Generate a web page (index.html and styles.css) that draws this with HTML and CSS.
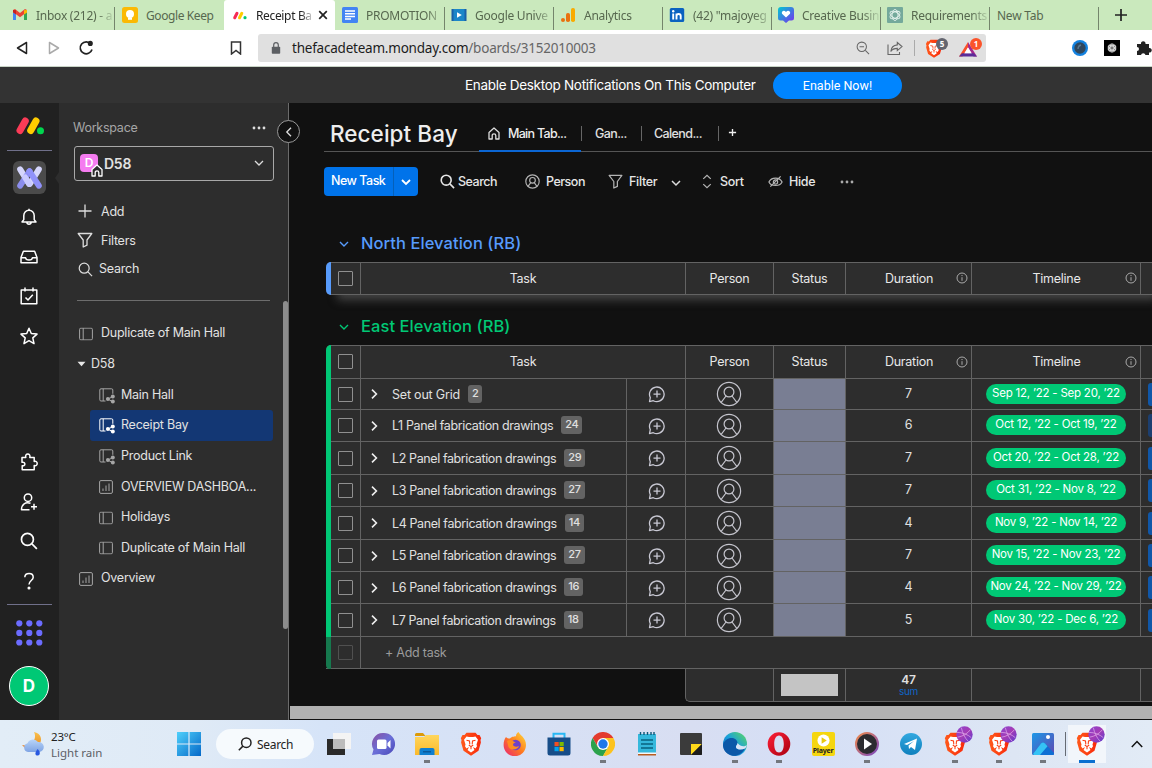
FILE: index.html
```html
<!DOCTYPE html>
<html lang="en">
<head>
<meta charset="utf-8">
<title>Receipt Bay</title>
<link rel="stylesheet" href="styles.css">
</head>
<body>
<svg class="sprite" aria-hidden="true">
  <defs>
    <linearGradient id="gBrave" x1="0" y1="0" x2="1" y2="0"><stop offset="0" stop-color="#ff5a1c"/><stop offset="1" stop-color="#f9280a"/></linearGradient>
    <linearGradient id="gWin" x1="0" y1="0" x2="1" y2="1"><stop offset="0" stop-color="#4fd0fb"/><stop offset="1" stop-color="#0568c8"/></linearGradient>
    <linearGradient id="gBall" x1="0" y1="0" x2="1" y2="1"><stop offset="0" stop-color="#8b45d0"/><stop offset=".5" stop-color="#a53bb5"/><stop offset="1" stop-color="#5a3fd0"/></linearGradient>
    <linearGradient id="gHeart" x1="0" y1="0" x2="1" y2="1"><stop offset="0" stop-color="#00c8d0"/><stop offset="1" stop-color="#7b2ff0"/></linearGradient>
    <linearGradient id="gEdge" x1="0" y1="1" x2="1" y2="0"><stop offset="0" stop-color="#0f5fb8"/><stop offset=".5" stop-color="#1ba0dc"/><stop offset="1" stop-color="#5fdc5a"/></linearGradient>
    <linearGradient id="gChat" x1="0" y1="0" x2="1" y2="1"><stop offset="0" stop-color="#8a4fa0"/><stop offset=".5" stop-color="#6a6fd8"/><stop offset="1" stop-color="#4a48b8"/></linearGradient>
    <linearGradient id="gFolder" x1="0" y1="0" x2="0" y2="1"><stop offset="0" stop-color="#ffd65c"/><stop offset="1" stop-color="#fbb92a"/></linearGradient>
    <linearGradient id="gFire" x1="1" y1="0" x2="0" y2="1"><stop offset="0" stop-color="#ffe03a"/><stop offset=".5" stop-color="#ff7a1f"/><stop offset="1" stop-color="#e8207a"/></linearGradient>
    <linearGradient id="gTg" x1="0" y1="0" x2="0" y2="1"><stop offset="0" stop-color="#32a8e0"/><stop offset="1" stop-color="#0f80bd"/></linearGradient>
    <linearGradient id="gPhoto" x1="0" y1="0" x2="1" y2="1"><stop offset="0" stop-color="#1c98e8"/><stop offset="1" stop-color="#6048b0"/></linearGradient>
    <linearGradient id="gMoon" x1="0" y1="0" x2="0" y2="1"><stop offset="0" stop-color="#fbc14a"/><stop offset="1" stop-color="#e8922a"/></linearGradient>
    <linearGradient id="gCloud" x1="0" y1="0" x2="0" y2="1"><stop offset="0" stop-color="#b8d4f8"/><stop offset="1" stop-color="#7fa4e4"/></linearGradient>
    <linearGradient id="gRing" x1="0" y1="0" x2="1" y2="1"><stop offset="0" stop-color="#f08a4a"/><stop offset="1" stop-color="#7a48c0"/></linearGradient>
    <linearGradient id="gOpera" x1="0" y1="0" x2="1" y2="1"><stop offset="0" stop-color="#ff2038"/><stop offset="1" stop-color="#a80010"/></linearGradient>
  </defs>
  <symbol id="search" viewBox="0 0 16 16"><circle cx="6.6" cy="6.6" r="5.3"/><path d="M10.6 10.6 15 15"/></symbol>
  <symbol id="filter" viewBox="0 0 16 16"><path d="M1.2 1.5h13.6L10 8v5.2L6.2 15V8z" stroke-linejoin="round"/></symbol>
  <symbol id="down" viewBox="0 0 10 10"><path d="M1 3l4 4 4-4"/></symbol>
  <symbol id="right" viewBox="0 0 10 10"><path d="M3 .6 7.4 5 3 9.4"/></symbol>
  <symbol id="left" viewBox="0 0 10 10"><path d="M7 .8 2.8 5 7 9.2"/></symbol>
  <symbol id="home" viewBox="0 0 12 13"><path d="M1 12V5.4L6 1l5 4.4V12H7.8V8.6a1.8 1.8 0 0 0-3.6 0V12z" stroke-linejoin="round"/></symbol>
  <symbol id="person" viewBox="0 0 26 26"><circle cx="13" cy="13" r="11.6"/><circle cx="13" cy="11" r="4.9"/><path d="M5.200 21.300 10 15M20.800 21.300 16 15"/></symbol>
  <symbol id="chatplus" viewBox="0 0 18 18"><path d="M2.300 12.600A7.300 7.300 0 1 1 5.300 15.700L1.500 16.700z" stroke-linejoin="round"/><path d="M9 5.600v7M5.500 9.100h7"/></symbol>
  <symbol id="info" viewBox="0 0 12 12"><circle cx="6" cy="6" r="5"/><path d="M6 5.200v3.600M6 3v1.100"/></symbol>
  <symbol id="board" viewBox="0 0 14 13"><rect x=".6" y=".6" width="12.800" height="11.800" rx="1.300"/><path d="M4.200.6v11.800"/></symbol>
  <symbol id="shared" viewBox="0 0 16 16"><path d="M6.500 13H2A1.200 1.200 0 0 1 .8 11.800V2A1.200 1.200 0 0 1 2 .8h10.600A1.200 1.200 0 0 1 13.800 2v3.800M4.200.8V13"/><path d="M13.800 8.700 8.800 11l5 2.800"/><g fill="currentColor" stroke="none"><circle cx="13.800" cy="8.400" r="2"/><circle cx="8.900" cy="11" r="2"/><circle cx="13.800" cy="13.600" r="2"/></g></symbol>
  <symbol id="dash" viewBox="0 0 14 14"><rect x=".6" y=".6" width="12.800" height="12.800" rx="1.300"/><path d="M4 8.500V11M7 5.500V11M10 3.500V11"/></symbol>
  <symbol id="brave" viewBox="0 0 22 24"><path d="M6.500.8h9l2 2.200 2-.1 1.700 3.300-.7 1.800.4 2.600-2.400 8.200-7.500 5-7.500-5L1.100 10.600l.4-2.600-.7-1.800L2.500 2.900l2 .1z" fill="url(#gBrave)"/><path d="M6.500 4.500 9 5h4l2.500-.5 2.500 3.300-1.500 4.700.5 1.700-1.500 2.300L13 15l1.500 3L11 20.500 7.500 18 9 15l-2.500 1.500L5 14.200l.5-1.700L4 7.800z" fill="#fff"/><path d="M6.500 8.300l3 .7.300 3.200M15.500 8.300l-3 .7-.3 3.200M8.800 13l2.200 1.600 2.200-1.600M11 14.600v2.600" stroke="#fb3d12" stroke-width="1.100" fill="none"/></symbol>
  <symbol id="ball" viewBox="0 0 16 16"><circle cx="8" cy="8" r="7.700" fill="url(#gBall)"/><path d="M1.500 10.500C6 10 11 7 13.500 3.500M1 6c5 0 10 2 13.500 5M5 1.500C6 6 8 11 11.500 14.500" stroke="#dfa8ea" stroke-width=".7" fill="none"/></symbol>
</svg>

<div class="tabs">
  <div class="tab t1"><svg class="fav" viewBox="0 0 16 16"><path d="M1 3v10h3V7.200l4 3 4-3V13h3V3l-2-1-5 4-5-4z" fill="#ea4335"/><path d="M1 5.200V13h3V7.400z" fill="#4285f4"/><path d="M12 7.400V13h3V5.200z" fill="#34a853"/><path d="M12 3.200 15 3v2.400l-3 2z" fill="#fbbc04"/><path d="M1 3v2.300l3 2V3.200z" fill="#c5221f"/></svg><span class="tt">Inbox (212) - a</span></div>
  <div class="tab t2"><svg class="fav" viewBox="0 0 16 16"><rect width="16" height="16" rx="2.500" fill="#fbb904"/><circle cx="8" cy="7" r="4" fill="#fff"/><path d="M6 10.500h4v2.300H6z" fill="#fff"/></svg><span class="tt">Google Keep</span></div>
  <div class="tab t3"><svg class="fav" viewBox="0 0 16 16"><g stroke-width="3" stroke-linecap="round"><path d="M2.700 10.800 5 6.300" stroke="#f62b54"/><path d="M7.500 10.800 9.800 6.300" stroke="#fc0"/></g><circle cx="13" cy="10.700" r="1.600" fill="#00ca72"/></svg><span class="tt">Receipt Ba</span><svg class="close" viewBox="0 0 10 10"><path d="M1.200 1.200l7.600 7.600M8.800 1.200 1.200 8.800"/></svg></div>
  <div class="tab t4 line"><svg class="fav" viewBox="0 0 16 16"><rect width="16" height="16" rx="1.500" fill="#4284f3"/><path d="M3 4h10M3 6.700h10M3 9.400h10M3 12.100h6" stroke="#fff" stroke-width="1.500"/></svg><span class="tt">PROMOTION</span></div>
  <div class="tab line"><svg class="fav" viewBox="0 0 16 16"><rect x=".5" y="2" width="15" height="12" fill="#1a5fa8"/><rect x="2.500" y="2" width="11" height="12" fill="#1b86c8"/><path d="M6 5.200v5.600L10.800 8z" fill="#fff"/></svg><span class="tt">Google Unive</span></div>
  <div class="tab line"><svg class="fav" viewBox="0 0 16 16"><rect x="11" y="1" width="4" height="14" rx="1.800" fill="#f9ab00"/><rect x="6" y="6" width="4" height="9" rx="1.800" fill="#e9710f"/><circle cx="3" cy="13" r="2" fill="#e9710f"/></svg><span class="tt">Analytics</span></div>
  <div class="tab line"><svg class="fav" viewBox="0 0 16 16"><rect x=".8" y="1" width="14.400" height="14" rx="1.500" fill="#0a62c0"/><path d="M4.200 6.500v6M7.500 6.500v6M7.500 9c0-2.600 4.200-2.600 4.200 0v3.500" stroke="#fff" stroke-width="1.900" fill="none"/><circle cx="4.200" cy="4.200" r="1.200" fill="#fff"/></svg><span class="tt">(42) "majoyeg</span></div>
  <div class="tab line"><svg class="fav" viewBox="0 0 16 16"><path d="M3 0h10a3 3 0 0 1 3 3v8a2.500 2.500 0 0 1-2.500 2.500H11L8 16l-3-2.500H2.500A2.500 2.500 0 0 1 0 11V3a3 3 0 0 1 3-3z" fill="url(#gHeart)"/><path d="M8 10.500 4 6.700C3 4.500 6 2.500 8 5c2-2.500 5-.5 4 1.700z" fill="#fff"/></svg><span class="tt">Creative Busin</span></div>
  <div class="tab line"><svg class="fav" viewBox="0 0 16 16"><rect width="16" height="16" rx="1" fill="#74a99b"/><g fill="none" stroke="#e4f2ec" stroke-width=".9"><ellipse cx="8" cy="8" rx="3" ry="5.500"/><ellipse cx="8" cy="8" rx="3" ry="5.500" transform="rotate(60 8 8)"/><ellipse cx="8" cy="8" rx="3" ry="5.500" transform="rotate(120 8 8)"/></g></svg><span class="tt">Requirements</span></div>
  <div class="tab line nt"><span class="tt">New Tab</span></div>
  <svg class="newtab" viewBox="0 0 12 12"><path d="M6 0v12M0 6h12"/></svg>
</div>

<div class="nav">
  <svg class="nb" viewBox="0 0 12 14"><path d="M10.500 1.500v11L1.500 7z"/></svg>
  <svg class="nb dim" viewBox="0 0 12 14"><path d="M1.500 1.500v11l9-5.500z"/></svg>
  <svg class="reload" viewBox="0 0 16 16"><path d="M12.900 4A6 6 0 1 0 14 9.500"/><circle cx="12.300" cy="3.400" r="1.700" fill="#222"/></svg>
  <svg class="mark" viewBox="0 0 12 14"><path d="M1.500 1h9v12L6 9.500 1.500 13z"/></svg>
  <div class="address">
    <svg class="lock" viewBox="0 0 10 12"><rect x=".8" y="4.800" width="8.400" height="7" rx=".8" fill="#5c5f63"/><path d="M2.700 5V3a2.300 2.300 0 0 1 4.600 0v2" fill="none" stroke="#5c5f63" stroke-width="1.200"/></svg>
    <span class="url"><b>thefacadeteam.monday.com</b>/boards/3152010003</span>
    <svg class="ai zoomi" viewBox="0 0 15 15"><circle cx="6.200" cy="6.200" r="5"/><path d="M10 10l4 4M3.800 6.200h4.800"/></svg>
    <svg class="ai share" viewBox="0 0 16 15"><path d="M1 3.500V13.500h11.500V11M10.300 1.500 15 5.600l-4.700 4V7.400C7 7.400 5 8.500 3.800 10.500c.4-3.600 2.700-6.300 6.500-6.600z"/></svg>
    <i class="asep"></i>
    <div class="shield"><svg viewBox="0 0 22 24"><use href="#brave"/></svg><em class="badge gray">5</em></div>
    <div class="shield bat"><svg viewBox="0 0 18 15"><path d="M9 .5 0 15h3.500L9 6z" fill="#f9502a"/><path d="M9 .5 18 15h-3.500L9 6z" fill="#a5288c"/><path d="M0 15h18l-3.300-3.300H3z" fill="#5b2c98"/><path d="M9 5.800 12.600 11.700H5.400z" fill="#fff"/></svg><em class="badge red">1</em></div>
  </div>
  <svg class="ext e1" viewBox="0 0 16 16"><circle cx="8" cy="8" r="8" fill="#1482e0"/><circle cx="8" cy="8" r="5.700" fill="#30475d"/><path d="M6 9c0-2 1-3.500 3-4" stroke="#5a7890" fill="none"/></svg>
  <svg class="ext e2" viewBox="0 0 16 16"><rect width="16" height="16" fill="#000"/><circle cx="8" cy="8" r="4.500" fill="#777"/><g fill="none" stroke="#ddd" stroke-width=".8"><ellipse cx="8" cy="8" rx="2" ry="4.200"/><ellipse cx="8" cy="8" rx="2" ry="4.200" transform="rotate(60 8 8)"/><ellipse cx="8" cy="8" rx="2" ry="4.200" transform="rotate(120 8 8)"/></g></svg>
  <svg class="ext e3" viewBox="0 0 16 16"><path d="M1 4h4a2.300 2.300 0 1 1 4.500 0H13v4a2.300 2.300 0 1 1 0 4.500V15H9.500a2.300 2.300 0 0 0-4.500 0H1v-4a2 2 0 0 0 0-4z" fill="#222"/></svg>
</div>

<div class="banner"><span class="btext">Enable Desktop Notifications On This Computer</span><span class="bbtn">Enable Now!</span></div>

<div class="app">
  <div class="rail">
    <div class="logo"><svg viewBox="0 0 28 18"><g stroke-width="7" stroke-linecap="round"><path d="M4 13.500 9.300 4" stroke="#fb3b57"/><path d="M14.700 13.500 20 4" stroke="#fc0"/></g><circle cx="24.500" cy="13.800" r="3.500" fill="#00d64f"/></svg></div>
    <i class="rline"></i>
    <div class="product"><svg viewBox="0 0 28 26"><g stroke-width="6.200" stroke-linecap="round"><path d="M23.700 4.500 14.500 19.500" stroke="#d5d6fc"/><path d="M4.300 4.500 13.500 19.500" stroke="#d5d6fc"/><path d="M14 6.500 4.300 21.500" stroke="#9092fa" opacity=".93"/><path d="M14 6.500 23.700 21.500" stroke="#9092fa"/><path d="M9.500 13l4 6.500" stroke="#c9caff"/></g></svg></div>
    <div class="ri"><svg viewBox="0 0 18 18"><path d="M2 14h14l-1.800-2.400V7.500a5.200 5.200 0 0 0-10.400 0v4.100zM9 2.200V.8M6.800 14.200c.3 2.800 4.100 2.800 4.400 0"/></svg></div>
    <div class="ri"><svg viewBox="0 0 18 18"><path d="M1 9.500 3.400 3.200h11.200L17 9.500v5.300H1zM1 9.800h4.600c.2 3 6.600 3 6.800 0H17"/></svg></div>
    <div class="ri"><svg viewBox="0 0 18 18"><path d="M1.200 3h15.600v13.800H1.200zM5 .5v4M13 .5v4M5.500 10.500 8 13l4.800-5.300"/></svg></div>
    <div class="ri"><svg viewBox="0 0 18 18"><path d="M9 1.300l2.300 5.200 5.700.6-4.200 3.800 1.200 5.700-5-2.900-5 2.900 1.200-5.700L1 7.100l5.700-.6z"/></svg></div>
    <div class="ri low"><svg viewBox="0 0 18 18"><path d="M2 4.500h3.800C4.300-.2 11.200-.2 9.800 4.500h4.400v4c4-1.300 4 5.300 0 4v4.300H2.200v-4.100c3.500 1 3.700-4.300-.2-3.400z"/></svg></div>
    <div class="ri"><svg viewBox="0 0 18 18"><circle cx="8" cy="4.700" r="3.700"/><path d="M10.500 10.300C5.500 8.800 1.500 11 1.500 16.800h8M14 10.800v6M11 13.800h6"/></svg></div>
    <div class="ri"><svg viewBox="0 0 16 16"><use href="#search"/></svg></div>
    <div class="ri"><svg viewBox="0 0 18 18"><path d="M4.800 5.200C5 .3 13.200.3 13.200 5.200c0 3.300-4.200 3.300-4.200 7.300"/><circle cx="9" cy="16" r=".8" fill="#fff"/></svg></div>
    <i class="rline l2"></i>
    <div class="dots"><svg viewBox="0 0 27 26"><g fill="#6c6cff"><circle cx="3.300" cy="3.300" r="3.100"/><circle cx="13.300" cy="3.300" r="3.100"/><circle cx="23.300" cy="3.300" r="3.100"/><circle cx="3.300" cy="12.900" r="3.100"/><circle cx="13.300" cy="12.900" r="3.100"/><circle cx="23.300" cy="12.900" r="3.100"/><circle cx="3.300" cy="22.500" r="3.100"/><circle cx="13.300" cy="22.500" r="3.100"/><circle cx="23.300" cy="22.500" r="3.100"/></g></svg></div>
    <div class="avatar">D</div>
  </div>

  <div class="side">
    <div class="notch"></div>
    <div class="collapse"><svg viewBox="0 0 10 10"><use href="#left"/></svg></div>
    <div class="whead"><span>Workspace</span><svg viewBox="0 0 14 4"><circle cx="2" cy="2" r="1.400"/><circle cx="7" cy="2" r="1.400"/><circle cx="12" cy="2" r="1.400"/></svg></div>
    <div class="wbox"><div class="wicon">D<svg viewBox="0 0 12 13"><use href="#home"/></svg></div><span>D58</span><svg class="wdown" viewBox="0 0 10 10"><use href="#down"/></svg></div>
    <div class="acts">
      <div class="act"><svg viewBox="0 0 16 16"><path d="M8 1.500v13M1.500 8h13"/></svg><span class="s1">Add</span></div>
      <div class="act"><svg viewBox="0 0 16 16"><use href="#filter"/></svg><span class="s2">Filters</span></div>
      <div class="act near"><svg viewBox="0 0 16 16"><use href="#search"/></svg><span class="s3">Search</span></div>
    </div>
    <div class="scroller">
      <div class="tree">
        <div class="node"><svg class="ic b" viewBox="0 0 14 13"><use href="#board"/></svg><span class="n1">Duplicate of Main Hall</span></div>
        <div class="node folder"><svg class="tri" viewBox="0 0 9 6"><path d="M.5.700h8L4.500 5.300z"/></svg><span>D58</span></div>
        <div class="node in"><svg class="ic" viewBox="0 0 16 16"><use href="#shared"/></svg><span>Main Hall</span></div>
        <div class="node in sel"><svg class="ic" viewBox="0 0 16 16"><use href="#shared"/></svg><span>Receipt Bay</span></div>
        <div class="node in"><svg class="ic" viewBox="0 0 16 16"><use href="#shared"/></svg><span>Product Link</span></div>
        <div class="node in"><svg class="ic b" viewBox="0 0 14 14"><use href="#dash"/></svg><span class="caps">OVERVIEW DASHBOA...</span></div>
        <div class="node in"><svg class="ic b" viewBox="0 0 14 13"><use href="#board"/></svg><span>Holidays</span></div>
        <div class="node in"><svg class="ic b" viewBox="0 0 14 13"><use href="#board"/></svg><span>Duplicate of Main Hall</span></div>
        <div class="node"><svg class="ic b" viewBox="0 0 14 14"><use href="#dash"/></svg><span>Overview</span></div>
      </div>
      <i class="thumb"></i>
    </div>
  </div>

  <div class="main">
    <div class="head">
      <h1>Receipt Bay</h1>
      <div class="view on"><svg viewBox="0 0 12 13"><use href="#home"/></svg><span>Main Tab...</span></div>
      <div class="view v2"><span>Gan...</span></div>
      <div class="view v3"><span>Calend...</span></div>
      <svg class="addview" viewBox="0 0 10 10"><path d="M5 1v8M1 5h8"/></svg>
    </div>
    <div class="tools">
      <div class="newtask"><span>New Task</span><svg viewBox="0 0 10 10"><use href="#down"/></svg></div>
      <div class="tool k1"><svg viewBox="0 0 16 16"><use href="#search"/></svg><span>Search</span></div>
      <div class="tool k2"><svg viewBox="0 0 26 26"><use href="#person"/></svg><span>Person</span></div>
      <div class="tool k3"><svg viewBox="0 0 16 16"><use href="#filter"/></svg><span>Filter</span></div>
      <div class="tool k4"><svg viewBox="0 0 10 10"><use href="#down"/></svg></div>
      <div class="tool k5"><svg viewBox="0 0 10 16"><path d="M1 5.200 5 1.400l4 3.800M1 10.800l4 3.800 4-3.800"/></svg><span>Sort</span></div>
      <div class="tool k6"><svg viewBox="0 0 16 14"><path d="M1 7.500C3.500 2 12.500 2 15 7.500 12.500 12.500 3.500 12.500 1 7.500z"/><circle cx="8" cy="7.500" r="2.300"/><path d="M2.500 12.500 13.500 1.500"/></svg><span>Hide</span></div>
      <div class="tool k7"><svg viewBox="0 0 14 4"><circle cx="2" cy="2" r="1.400"/><circle cx="7" cy="2" r="1.400"/><circle cx="12" cy="2" r="1.400"/></svg></div>
    </div>

    <div class="gtitle blue"><svg viewBox="0 0 10 10"><use href="#down"/></svg><h2>North Elevation (RB)</h2></div>
    <div class="row hd first">
      <i class="bar"></i><div class="c ck"><i class="box"></i></div><div class="c task">Task</div><div class="c">Person</div><div class="c">Status</div>
      <div class="c wi"><span>Duration</span><svg viewBox="0 0 12 12"><use href="#info"/></svg></div><div class="c wi"><span>Timeline</span><svg viewBox="0 0 12 12"><use href="#info"/></svg></div><div class="end"></div>
    </div>

    <div class="gtitle green"><svg viewBox="0 0 10 10"><use href="#down"/></svg><h2>East Elevation (RB)</h2></div>
    <div class="row hd second">
      <i class="bar"></i><div class="c ck"><i class="box"></i></div><div class="c task">Task</div><div class="c">Person</div><div class="c">Status</div>
      <div class="c wi"><span>Duration</span><svg viewBox="0 0 12 12"><use href="#info"/></svg></div><div class="c wi"><span>Timeline</span><svg viewBox="0 0 12 12"><use href="#info"/></svg></div><div class="end"></div>
    </div>
    <div class="row h31"><i class="bar"></i><div class="c ck"><i class="box"></i></div><div class="c name"><svg viewBox="0 0 10 10"><use href="#right"/></svg><span class="nm">Set out Grid</span><b>2</b></div><div class="c talk"><svg viewBox="0 0 18 18"><use href="#chatplus"/></svg></div><div class="c who"><svg viewBox="0 0 26 26"><use href="#person"/></svg></div><div class="c st"></div><div class="c num">7</div><div class="c tl"><span>Sep 12, ’22 - Sep 20, ’22</span></div><div class="end"><i></i></div></div>
    <div class="row h32"><i class="bar"></i><div class="c ck"><i class="box"></i></div><div class="c name"><svg viewBox="0 0 10 10"><use href="#right"/></svg><span class="nm">L1 Panel fabrication drawings</span><b>24</b></div><div class="c talk"><svg viewBox="0 0 18 18"><use href="#chatplus"/></svg></div><div class="c who"><svg viewBox="0 0 26 26"><use href="#person"/></svg></div><div class="c st"></div><div class="c num">6</div><div class="c tl"><span>Oct 12, ’22 - Oct 19, ’22</span></div><div class="end"><i class="dk"></i></div></div>
    <div class="row h33"><i class="bar"></i><div class="c ck"><i class="box"></i></div><div class="c name"><svg viewBox="0 0 10 10"><use href="#right"/></svg><span class="nm">L2 Panel fabrication drawings</span><b>29</b></div><div class="c talk"><svg viewBox="0 0 18 18"><use href="#chatplus"/></svg></div><div class="c who"><svg viewBox="0 0 26 26"><use href="#person"/></svg></div><div class="c st"></div><div class="c num">7</div><div class="c tl"><span>Oct 20, ’22 - Oct 28, ’22</span></div><div class="end"><i></i></div></div>
    <div class="row h32"><i class="bar"></i><div class="c ck"><i class="box"></i></div><div class="c name"><svg viewBox="0 0 10 10"><use href="#right"/></svg><span class="nm">L3 Panel fabrication drawings</span><b>27</b></div><div class="c talk"><svg viewBox="0 0 18 18"><use href="#chatplus"/></svg></div><div class="c who"><svg viewBox="0 0 26 26"><use href="#person"/></svg></div><div class="c st"></div><div class="c num">7</div><div class="c tl"><span>Oct 31, ’22 - Nov 8, ’22</span></div><div class="end"><i></i></div></div>
    <div class="row h33"><i class="bar"></i><div class="c ck"><i class="box"></i></div><div class="c name"><svg viewBox="0 0 10 10"><use href="#right"/></svg><span class="nm">L4 Panel fabrication drawings</span><b>14</b></div><div class="c talk"><svg viewBox="0 0 18 18"><use href="#chatplus"/></svg></div><div class="c who"><svg viewBox="0 0 26 26"><use href="#person"/></svg></div><div class="c st"></div><div class="c num">4</div><div class="c tl"><span>Nov 9, ’22 - Nov 14, ’22</span></div><div class="end"><i></i></div></div>
    <div class="row h32"><i class="bar"></i><div class="c ck"><i class="box"></i></div><div class="c name"><svg viewBox="0 0 10 10"><use href="#right"/></svg><span class="nm">L5 Panel fabrication drawings</span><b>27</b></div><div class="c talk"><svg viewBox="0 0 18 18"><use href="#chatplus"/></svg></div><div class="c who"><svg viewBox="0 0 26 26"><use href="#person"/></svg></div><div class="c st"></div><div class="c num">7</div><div class="c tl"><span>Nov 15, ’22 - Nov 23, ’22</span></div><div class="end"><i></i></div></div>
    <div class="row h32"><i class="bar"></i><div class="c ck"><i class="box"></i></div><div class="c name"><svg viewBox="0 0 10 10"><use href="#right"/></svg><span class="nm">L6 Panel fabrication drawings</span><b>16</b></div><div class="c talk"><svg viewBox="0 0 18 18"><use href="#chatplus"/></svg></div><div class="c who"><svg viewBox="0 0 26 26"><use href="#person"/></svg></div><div class="c st"></div><div class="c num">4</div><div class="c tl"><span>Nov 24, ’22 - Nov 29, ’22</span></div><div class="end"><i></i></div></div>
    <div class="row h33"><i class="bar"></i><div class="c ck"><i class="box"></i></div><div class="c name"><svg viewBox="0 0 10 10"><use href="#right"/></svg><span class="nm">L7 Panel fabrication drawings</span><b>18</b></div><div class="c talk"><svg viewBox="0 0 18 18"><use href="#chatplus"/></svg></div><div class="c who"><svg viewBox="0 0 26 26"><use href="#person"/></svg></div><div class="c st"></div><div class="c num">5</div><div class="c tl"><span>Nov 30, ’22 - Dec 6, ’22</span></div><div class="end"><i></i></div></div>
    <div class="row h32 add"><i class="bar"></i><div class="c ck"><i class="box"></i></div><div class="addtext"><span>+ Add task</span></div></div>
    <div class="sumrow"><div class="c"></div><div class="c"><i class="chip"></i></div><div class="c total"><strong>47</strong><small>sum</small></div><div class="c"></div><div class="end"></div></div>
    <div class="hscroll"></div>
  </div>
</div>

<div class="taskbar">
  <svg class="weather" viewBox="0 0 24 26"><path d="M13 1c7 1 9 8 5 13l-7-2c3-3 4-7 2-11z" fill="url(#gMoon)"/><path d="M1 14l5 5 2-4z" fill="#e8862a"/><path d="M7 21a4.500 4.500 0 0 1-.5-8.800A6 6 0 0 1 17 11a5 5 0 0 1 1.500 10z" fill="url(#gCloud)"/><path d="M16.500 18c3 2.500 3 6 .3 6.500-3 .2-3.300-2.500-.3-6.500z" fill="#2858e0"/></svg>
  <div class="wt"><span>23°C</span><span class="rain">Light rain</span></div>
  <svg class="win" viewBox="0 0 24 24"><path d="M0 0h11.400v11.400H0zM12.600 0H24v11.400H12.600zM0 12.600h11.400V24H0zM12.600 12.600H24V24H12.600z" fill="url(#gWin)"/></svg>
  <div class="tsearch"><svg viewBox="0 0 14 14"><circle cx="8.300" cy="5.700" r="4.700"/><path d="M4.900 9.100.8 13.200"/></svg><span>Search</span></div>
  <div class="task-ic"><svg viewBox="0 0 24 24"><rect x="6" y="1" width="18" height="16" fill="#f4f4f4"/><rect x="0" y="7" width="18" height="16" fill="#2a2a2a"/><rect x="6" y="7" width="12" height="10" fill="#bcbcbc"/></svg></div>
  <div class="task-ic"><svg viewBox="0 0 24 24"><path d="M12.500 1a11 11 0 1 1-4 21L1 23l1.500-5.500A11 11 0 0 1 12.500 1z" fill="url(#gChat)"/><rect x="6" y="7.500" width="9.500" height="9.500" rx="1.500" fill="#fff"/><path d="M16.500 11l3-3v8.500l-3-3z" fill="#fff"/></svg></div>
  <div class="task-ic run"><svg viewBox="0 0 24 24"><path d="M0 2.500A1.500 1.500 0 0 1 1.500 1H8l2.500 3H0z" fill="#dc9a08"/><path d="M0 5h9l2-2h13v20H0z" fill="url(#gFolder)"/><path d="M4.500 23v-5a2 2 0 0 1 2-2h11a2 2 0 0 1 2 2v5z" fill="#0f7fd0"/><path d="M8 19h8v1.500H8z" fill="#0a5a9c"/></svg></div>
  <div class="task-ic"><svg viewBox="0 0 22 24"><use href="#brave"/></svg></div>
  <div class="task-ic"><svg viewBox="0 0 24 24"><path d="M3 5c1 1 2 1.500 4 1.500C9 4 12 5 13 4c0-2 1-3 2.500-4 1 3 7.500 5.500 7.500 13a11.200 11.200 0 0 1-22.400 0C.6 9.500 1.500 7 3 5z" fill="url(#gFire)"/><circle cx="12.500" cy="13" r="5.300" fill="#7040c8"/><path d="M4 9c5-3 6 1 9 1.500-2 .3-3 1-3 2.500 1 2 4 2 6 1-1 4-8 5-10.500 1z" fill="#ff8c20"/></svg></div>
  <div class="task-ic"><svg viewBox="0 0 24 24"><path d="M6.500 6V1.800h11V6" fill="none" stroke="#28b8f4" stroke-width="2"/><path d="M.5 5.500h23V21a2.500 2.500 0 0 1-2.500 2.500H3A2.500 2.500 0 0 1 .5 21z" fill="#174d88"/><path d="M7.500 10h4.200v4.200H7.500z" fill="#f25022"/><path d="M12.500 10h4.200v4.200h-4.200z" fill="#7fba00"/><path d="M7.500 15h4.200v4.200H7.500z" fill="#00a4ef"/><path d="M12.500 15h4.200v4.200h-4.200z" fill="#ffb900"/></svg></div>
  <div class="task-ic run"><svg viewBox="0 0 24 24"><path d="M1.600 6A12 12 0 0 1 22.400 6H12z" fill="#e33b2e"/><path d="M1.600 6 6.800 15 12 12V6z" fill="#e33b2e"/><path d="M1.600 6A12 12 0 0 0 12 24l5.200-9L12 12l-5.200 3z" fill="#2ba24c"/><path d="M22.400 6A12 12 0 0 1 12 24l5.200-9L12 6z" fill="#fcc31e"/><circle cx="12" cy="12" r="6" fill="#fff"/><circle cx="12" cy="12" r="4.700" fill="#1f78e8"/></svg></div>
  <div class="task-ic"><svg viewBox="0 0 24 24"><rect x="3" y="2" width="18" height="20" fill="#35b8dc"/><path d="M3 21h18v2.500H3z" fill="#b85c20"/><path d="M3 20.500h18V22H3z" fill="#f4f8fb"/><path d="M6 8h12M6 12h12M6 16h12" stroke="#08627f" stroke-width="1.500"/><path d="M5.500 0v3M9 0v3M12.500 0v3M16 0v3M19 0v3" stroke="#0e5878" stroke-width="1.400"/></svg></div>
  <div class="task-ic"><svg viewBox="0 0 24 24"><rect x="1" y="1" width="22" height="22" rx="1" fill="#3b3b3b"/><path d="M12 12h11L12 23z" fill="#ffd91a"/><path d="M12 23 23 12v10a1 1 0 0 1-1 1z" fill="#1d1d1d"/></svg></div>
  <div class="task-ic run"><svg viewBox="0 0 24 24"><circle cx="12" cy="12" r="12" fill="url(#gEdge)"/><path d="M0 13C2 4 14 4 14.500 11c0 2-2 2.500-1.500 4.500 1 2.500 6 2.500 9 1-3 6-9 8-13 7C3 22 0 18 0 13z" fill="#0c58a8"/><path d="M14.500 11c0 2-2 2.500-1.500 4.500 1 2.500 6 2.500 9 1 1-1 1.500-2 1.700-3.500-2 2-6 2-9.200-2z" fill="#dbe4f6"/></svg></div>
  <div class="task-ic run"><svg viewBox="0 0 24 24"><path fill-rule="evenodd" d="M12 .3a11.300 11.700 0 1 0 0 23.400A11.300 11.700 0 0 0 12 .3zm0 3.200c3 0 4.800 3.500 4.800 8.500s-1.800 8.500-4.800 8.500S7.200 17 7.200 12 9 3.500 12 3.500z" fill="url(#gOpera)"/></svg></div>
  <div class="task-ic"><div class="player"><svg viewBox="0 0 14 14"><circle cx="7" cy="7" r="6.500" fill="#fff"/><path d="M5 3.500v7L10.500 7z" fill="#e8c810"/></svg><span>Player</span></div></div>
  <div class="task-ic run"><svg viewBox="0 0 24 24"><circle cx="12" cy="12" r="11" fill="#2c2c30" stroke="url(#gRing)" stroke-width="2"/><path d="M9 6.500v11l8-5.500z" fill="#fff"/></svg></div>
  <div class="task-ic"><svg viewBox="0 0 24 24"><circle cx="12" cy="12" r="11" fill="url(#gTg)"/><path d="M5 12 18 6.500 16 18l-4-3-2 2-.5-3.500L15 9l-7 4z" fill="#fff"/></svg></div>
  <div class="task-ic run"><svg viewBox="0 0 22 24"><use href="#brave"/></svg><svg class="bl" viewBox="0 0 16 16"><use href="#ball"/></svg></div>
  <div class="task-ic run"><svg viewBox="0 0 22 24"><use href="#brave"/></svg><svg class="bl" viewBox="0 0 16 16"><use href="#ball"/></svg></div>
  <div class="task-ic run"><svg viewBox="0 0 24 24"><rect x="1" y="1" width="22" height="22" rx="1.500" fill="url(#gPhoto)"/><path d="M2 22 10 11.500Q12 9.500 14 11.500L23 21v1a1 1 0 0 1-1 1H3z" fill="#0f6fd4"/><path d="M2 22 10 11.500Q12 9.500 14 11.500l2.500 2.700L9 23H3z" fill="#35c3f5"/><circle cx="17" cy="5" r="2" fill="#fff"/></svg></div>
  <div class="task-ic act2"><svg viewBox="0 0 22 24"><use href="#brave"/></svg><svg class="bl" viewBox="0 0 16 16"><use href="#ball"/></svg></div>
  <svg class="up" viewBox="0 0 12 8"><path d="M.8 7 6 1.500 11.200 7"/></svg>
</div>
</body>
</html>
```
FILE: styles.css
```css
* { box-sizing: border-box; }
body { margin: 0; width: 1152px; height: 768px; overflow: hidden; font-family: Inter, "Liberation Sans", sans-serif; display: flex; flex-direction: column; background: #111; }
svg { display: block; flex: none; fill: none; stroke-width: 1.3; }
i, em { font-style: normal; display: block; }
h1, h2 { margin: 0; font-weight: 500; }
span { white-space: nowrap; }
.sprite { position: absolute; width: 0; height: 0; }

/* browser tabs */
.tabs { height: 30px; flex: none; background: #cae9bd; display: flex; font: 12px "Noto Sans", sans-serif; color: #57684f; }
.tab { width: 109px; height: 30px; padding-left: 6px; display: flex; align-items: center; flex: none; overflow: hidden; }
.tab.line, .t1 { background: linear-gradient(#74856c, #74856c) right 7px / 1px 23px no-repeat; }
.t1 { width: 115px; padding-left: 12px; }
.t2 { padding-left: 7px; }
.t3 { width: 111px; padding-left: 8px; background: #fff; color: #222; border-radius: 3px 3px 0 0; }
.t4 { width: 110px; padding-left: 7px; }
.fav { width: 16px; height: 16px; margin-right: 8px; }
.tt { flex: 1; overflow: hidden; margin-right: 2px; letter-spacing: -.25px; -webkit-mask-image: linear-gradient(90deg, #000 78%, rgba(0,0,0,.15)); }
.t2 .tt, .nt .tt { -webkit-mask-image: none; }
.t2 .tt { letter-spacing: -.4px; }
.t3 .tt { flex: none; width: 57px; margin-right: 5px; letter-spacing: -.35px; }
.close { width: 10px; height: 10px; stroke: #222; stroke-width: 1.700; }
.nt { padding-left: 7px; }
.newtab { width: 12px; height: 12px; margin: 9px 0 0 16px; stroke: #222; stroke-width: 1.700; }

/* navigation bar */
.nav { height: 37px; flex: none; background: #fff; border-bottom: 1px solid #c9d4c6; display: flex; align-items: center; }
.nb { width: 12px; height: 14px; margin-left: 16px; stroke: #222; stroke-width: 1.500; stroke-linejoin: round; }
.nb.dim { margin-left: 20px; stroke: #aaa; }
.reload { width: 16px; height: 16px; margin-left: 18px; stroke: #222; stroke-width: 1.700; }
.mark { width: 12px; height: 14px; margin-left: 136px; stroke: #333; stroke-width: 1.500; }
.address { width: 728px; height: 28px; margin-left: 16px; background: #e0e0e0; border-radius: 3px; display: flex; align-items: center; padding-left: 13px; }
.lock { width: 10px; height: 12px; }
.url { font: 13.500px "Noto Sans", sans-serif; color: #666; margin-left: 11px; width: 564px; letter-spacing: -.22px; padding-bottom: 1px; }
.url b { font-weight: 400; color: #1c1c1c; }
.ai { stroke: #666; stroke-width: 1.100; }
.zoomi { width: 14px; height: 14px; }
.share { width: 16px; height: 15px; margin-left: 17px; }
.asep { width: 1px; height: 16px; background: #aaa; margin-left: 11px; }
.shield { position: relative; margin-left: 10px; width: 18px; height: 19px; }
.shield svg { width: 18px; height: 19px; }
.bat { margin-left: 16px; height: 16px; }
.bat svg { width: 18px; height: 16px; margin-top: 1px; }
.badge { position: absolute; width: 12px; height: 12px; border-radius: 6px; color: #fff; font: 700 8px/12px "Noto Sans", sans-serif; text-align: center; }
.gray { background: #63656f; left: 11px; top: -1px; }
.red { background: #fb542b; left: 11px; top: -2px; }
.ext { width: 16px; height: 16px; }
.e1 { margin-left: 86px; }
.e2, .e3 { margin-left: 16px; }

/* notification banner */
.banner { height: 36px; flex: none; background: #333; color: #fff; display: flex; align-items: center; padding-left: 465px; font-size: 13.500px; }
.btext { width: 308px; letter-spacing: -.3px; }
.bbtn { width: 129px; height: 27px; border-radius: 14px; background: #0085ff; text-align: center; font: 12.500px/27px Roboto, sans-serif; }

.app { height: 617px; flex: none; display: flex; }

/* icon rail */
.rail { width: 59px; flex: none; background: #212121; display: flex; flex-direction: column; align-items: center; padding-bottom: 14px; }
.logo { height: 47px; width: 59px; padding: 14px 0 0 16px; }
.logo svg { width: 28px; height: 18px; }
.rline { width: 45px; height: 1px; background: #70708a; flex: none; }
.product { width: 33px; height: 33px; border-radius: 6px; background: #4b4b4b; margin: 10px 0 4px; padding: 4px 3px; flex: none; }
.product svg { width: 27px; height: 25px; }
.ri { height: 39.600px; flex: none; display: flex; align-items: center; stroke: #fff; margin-right: 1px; padding-bottom: 1px; }
.ri svg { width: 18px; height: 18px; stroke-width: 1.500; stroke-linejoin: round; }
.low { margin-top: auto; }
.l2 { margin-top: 3px; }
.dots { height: 57px; padding-top: 15px; }
.dots svg { width: 27px; height: 26px; }
.avatar { width: 40px; height: 40px; flex: none; margin-top: 4px; margin-right: 1px; border-radius: 20px; border: 1px solid #fff; background: #00c875; color: #fff; font: 700 17px/39px Inter, sans-serif; text-align: center; }

/* workspace sidebar */
.side { width: 230px; flex: none; position: relative; background: #2d2d2d; border-right: 1px solid #6b6b6b; color: #e2e2e2; font-size: 12.500px; letter-spacing: -.24px; }
.notch { position: absolute; left: -4px; top: 69px; border: solid transparent; border-width: 6px 4px 6px 0; border-right-color: #2d2d2d; }
.collapse { position: absolute; right: -12px; top: 17px; width: 23px; height: 23px; border: 1px solid #999; border-radius: 12px; background: #111; display: grid; place-items: center; stroke: #ddd; z-index: 2; }
.collapse svg { width: 10px; height: 10px; }
.whead { height: 43px; padding: 6px 22px 0 14px; display: flex; justify-content: space-between; align-items: center; color: #a6a6a6; }
.whead svg { width: 14px; height: 4px; fill: #ddd; }
.wbox { width: 200px; height: 35px; margin-left: 15px; border: 1px solid #a8a8a8; border-radius: 3px; display: flex; align-items: center; padding: 0 0 1px 5px; font-weight: 600; font-size: 14px; }
.wicon { position: relative; width: 18px; height: 18px; border-radius: 4px; background: #f57cf0; color: #fff; font-size: 12px; text-align: center; line-height: 18px; margin-right: 6px; }
.wicon svg { position: absolute; left: 11px; top: 10px; width: 12px; height: 13px; stroke: #fff; fill: #2d2d2d; }
.wdown { width: 10px; height: 10px; margin-left: auto; margin-right: 9px; stroke: #ddd; }
.acts { height: 120px; padding-top: 16px; margin-left: 18px; width: 193px; border-bottom: 1px solid #6d6d6d; }
.act { height: 28.700px; display: flex; align-items: center; stroke: #ddd; }
.act svg { width: 16px; height: 16px; margin-right: 8px; }
.act span, .node span { stroke: none; }
.near svg { margin: 2px 6px 0 1px; width: 15px; height: 15px; }
.scroller { display: flex; justify-content: space-between; }
.tree { width: 214px; padding-top: 17px; }
.node { height: 30.650px; display: flex; align-items: center; padding-left: 20px; }
.node span { padding-bottom: 1px; }
.ic { width: 16px; height: 16px; margin: 2px 6px 0 -1px; color: #a6a6a6; stroke: #a6a6a6; stroke-width: 1; }
.ic.b { width: 14px; height: 14px; margin: 1px 8px 0 0; }
.folder { padding-left: 18px; }
.tri { width: 9px; height: 6px; fill: #e6e6e6; margin-right: 5px; }
.in { margin-left: 31px; padding-left: 9px; }
.in .ic { margin-left: 0; }
.sel { background: #133774; border-radius: 3px; }
.sel .ic { color: #fff; stroke: #fff; }
.thumb { width: 5px; height: 328px; background: #8c8c8c; border-radius: 3px; }

/* board */
.main { flex: 1; min-width: 0; background: #111; color: #e0e0e0; font-size: 12.500px; letter-spacing: -.25px; display: flex; flex-direction: column; }
.head { height: 49px; margin-left: 35px; padding: 14px 0 0 6px; border-bottom: 1px solid #555; display: flex; flex: none; }
.head h1 { width: 149px; font-size: 22.500px; line-height: 34px; letter-spacing: .05px; color: #eee; white-space: nowrap; }
.view { height: 34px; position: relative; padding-left: 14px; display: flex; align-items: center; padding-bottom: 2px; background: linear-gradient(#666, #666) right 9px / 1px 15px no-repeat; }
.on { width: 103px; padding-left: 9px; font-weight: 500; color: #eee; letter-spacing: -.75px; }
.on span { letter-spacing: -.75px; }
.on::after { content: ""; position: absolute; left: 0; bottom: -1px; width: 102px; height: 2px; background: #0b66d4; }
.on span { letter-spacing: -.7px; }
.on svg { width: 12px; height: 13px; stroke: #ddd; margin-right: 8px; }
.v2 { width: 60px; padding-left: 13px; letter-spacing: -.6px; font-weight: 500; }
.v3 { width: 77px; padding-left: 12px; letter-spacing: -.6px; font-weight: 500; }
.addview { width: 9px; height: 9px; stroke: #eee; stroke-width: 1.500; margin: 11px 0 0 9px; }
.tools { display: flex; height: 29px; margin: 15px 0 0 35px; flex: none; }
.newtask { width: 94px; height: 29px; background: #0073ea; border-radius: 4px; color: #fff; display: flex; align-items: center; margin-right: 22px; }
.newtask span { width: 70px; height: 29px; line-height: 28px; padding-left: 7px; border-right: 1px solid #0560b9; font-weight: 500; letter-spacing: -.5px; }
.newtask svg { width: 10px; height: 10px; stroke: #fff; stroke-width: 1.800; margin-left: 7px; }
.tool { display: flex; align-items: center; gap: 7px; stroke: #b5b5b5; color: #e6e6e6; font-weight: 500; letter-spacing: -.5px; }
.tool span { stroke: none; }
.tool svg { width: 15px; height: 15px; }
.k1 { width: 85px; gap: 3px; stroke: #e6e6e6; }
.k1 svg { stroke-width: 1.700; }
.k2 { width: 83px; gap: 6px; }
.k2 svg { stroke-width: 2; }
.k3 { width: 63px; gap: 6px; letter-spacing: -.3px; }
.k4 { width: 31px; stroke: #ddd; }
.k4 svg { width: 10px; height: 10px; stroke-width: 1.500; margin-top: 2px; }
.k5 { width: 66px; gap: 8px; letter-spacing: -.3px; }
.k5 svg { width: 10px; }
.k6 { width: 72px; gap: 6px; letter-spacing: -.3px; }
.k7 { stroke: none; fill: #aaa; }
.k7 svg { width: 14px; height: 4px; fill: #aaa; }
.gtitle { display: flex; align-items: center; padding-left: 50px; flex: none; }
.gtitle svg { width: 10px; height: 10px; margin-right: 12px; stroke-width: 1.400; }
.gtitle h2 { font-size: 16.500px; letter-spacing: .06px; white-space: nowrap; stroke: none; padding-bottom: 2px; }
.blue { height: 66px; padding-top: 30px; color: #579bfc; stroke: #579bfc; }
.green { height: 50px; padding-top: 14px; color: #00c875; stroke: #00c875; }
.row { margin-left: 37px; flex: none; display: grid; grid-template-columns: 5px 30px 266px 59px 88px 72px 126px 169px 11px; border-bottom: 1px solid #636363; background: linear-gradient(#2d2d2d, #2d2d2d) 5px 0 no-repeat; }
.hd { grid-template-columns: 5px 30px 325px 88px 72px 126px 169px 11px; border-top: 1px solid #636363; }
.first { height: 33px; border-radius: 5px 0 0 5px; box-shadow: 8px 8px 10px -3px rgba(120,120,120,.5); }
.first .bar { background: #579bfc; border-radius: 5px 0 0 5px; margin: -1px 0; }
.second { height: 34px; border-top-left-radius: 5px; }
.second .bar { margin-top: -1px; border-radius: 5px 0 0 0; }
.bar { background: #00c875; margin-bottom: -1px; }
.h31 { height: 31px; } .h32 { height: 32px; } .h33 { height: 33px; }
.c { border-right: 1px solid #636363; display: flex; align-items: center; justify-content: center; min-width: 0; }
.hd .c { color: #e8e8e8; }
.hd .c:not(.ck) { padding-bottom: 1px; }
.second .c { padding-bottom: 1px; }
.box { width: 15px; height: 15px; border: 1px solid #909090; border-radius: 1px; }
.wi { display: grid; grid-template-columns: 1fr auto 1fr; }
.wi span { grid-column: 2; padding-left: 1px; }
.wi svg { width: 12px; height: 12px; stroke: #aaa; stroke-width: 1; justify-self: end; margin-right: 3px; }
.name { justify-content: flex-start; padding-left: 8px; }
.name svg { width: 10px; height: 10px; stroke: #eee; stroke-width: 1.600; margin-right: 13px; }
.nm { letter-spacing: -.39px; }
.h31 .nm { letter-spacing: -.2px; }
.name b { height: 18px; padding: 0 4px; margin: -1px 0 0 8px; background: #636363; border-radius: 3px; font: 500 11px/17px Inter, sans-serif; letter-spacing: -.3px; }
.talk svg { width: 18px; height: 18px; stroke: #c9c9d4; margin-left: 1px; }
.who svg { width: 26px; height: 26px; stroke: #c4c4cc; stroke-width: 1.200; margin-right: 1px; }
.st { background: #797e93; }
.num { padding-bottom: 2px; }
.tl { padding-bottom: 1px; }
.tl span { width: 140px; height: 20px; border-radius: 10px; background: #00c875; color: #fff; text-align: center; line-height: 19px; font-size: 11.500px; letter-spacing: -.22px; }
.end { display: flex; align-items: center; justify-content: flex-end; }
.end i { width: 4px; height: 23px; background: #1057a8; border-radius: 3px 0 0 3px; }
.end .dk { background: #1c3f70; }
.add { grid-template-columns: 5px 30px 1fr; }
.add .bar { background: #16794e; border-bottom-left-radius: 4px; }
.add .box { border-color: #505050; }
.addtext { padding-left: 24px; display: flex; align-items: center; color: #9b9b9b; }
.sumrow { height: 33px; flex: none; margin-left: 396px; display: grid; grid-template-columns: 88px 72px 126px 169px 11px; background: #2d2d2d; border: solid #636363; border-width: 0 0 1px 1px; border-bottom-left-radius: 5px; }
.chip { width: 57px; height: 22px; background: #c4c4c4; }
.total { flex-direction: column; }
.total strong { font: 600 12px/12px Inter, sans-serif; }
.total small { font: 10px/12px Inter, sans-serif; color: #0d66c8; margin-top: -1px; }
.hscroll { height: 13px; margin: auto 0 1px 1px; background: #b1b1b1; }

/* desktop taskbar */
.taskbar { height: 48px; flex: none; background: linear-gradient(90deg, #e2edf7 0, #dfeaf6 17%, #d6e4f8 28%, #d8def2 60%, #d5dff6 70%, #dde6f4 88%, #e2ebf6 100%); display: flex; align-items: center; font: 12px "Noto Sans", sans-serif; color: #222; }
.weather { width: 24px; height: 26px; margin-left: 21px; }
.wt { width: 126px; margin-left: 6px; display: flex; flex-direction: column; line-height: 16px; font-size: 11.500px; letter-spacing: -.2px; padding-top: 1px; }
.rain { color: #5c6066; letter-spacing: 0; }
.win { width: 24px; height: 24px; }
.tsearch { width: 98px; height: 30px; margin: 0 3px 0 15px; border-radius: 15px; background: #f6fafd; display: flex; align-items: center; padding-left: 22px; gap: 5px; letter-spacing: -.3px; }
.tsearch svg { width: 14px; height: 14px; stroke: #222; stroke-width: 1.500; }
.task-ic { width: 44px; height: 48px; flex: none; display: grid; place-items: center; position: relative; }
.task-ic > svg { width: 24px; height: 24px; }
.run { background: linear-gradient(#73777e, #73777e) center 40px / 6px 3px no-repeat; }
.task-ic > .bl { position: absolute; width: 17px; height: 17px; left: 23px; top: 6px; }
.act2 { background: linear-gradient(#0a6fd0, #0a6fd0) center 40px / 16px 3px no-repeat, linear-gradient(#f2f6fb, #f2f6fb) center 5px / 38px 38px no-repeat; }
.act2::before { content: ""; position: absolute; left: 0; top: 12px; width: 1px; height: 24px; background: #666b73; }
.player { width: 23px; height: 24px; background: #f5d60f; border-radius: 2px; display: flex; flex-direction: column; align-items: center; padding-top: 2px; }
.player svg { width: 13px; height: 13px; }
.player span { font: 700 7px/8px "Noto Sans", sans-serif; letter-spacing: -.2px; color: #222; }
.up { width: 12px; height: 8px; margin-left: 22px; stroke: #111; stroke-width: 1.500; }
```
